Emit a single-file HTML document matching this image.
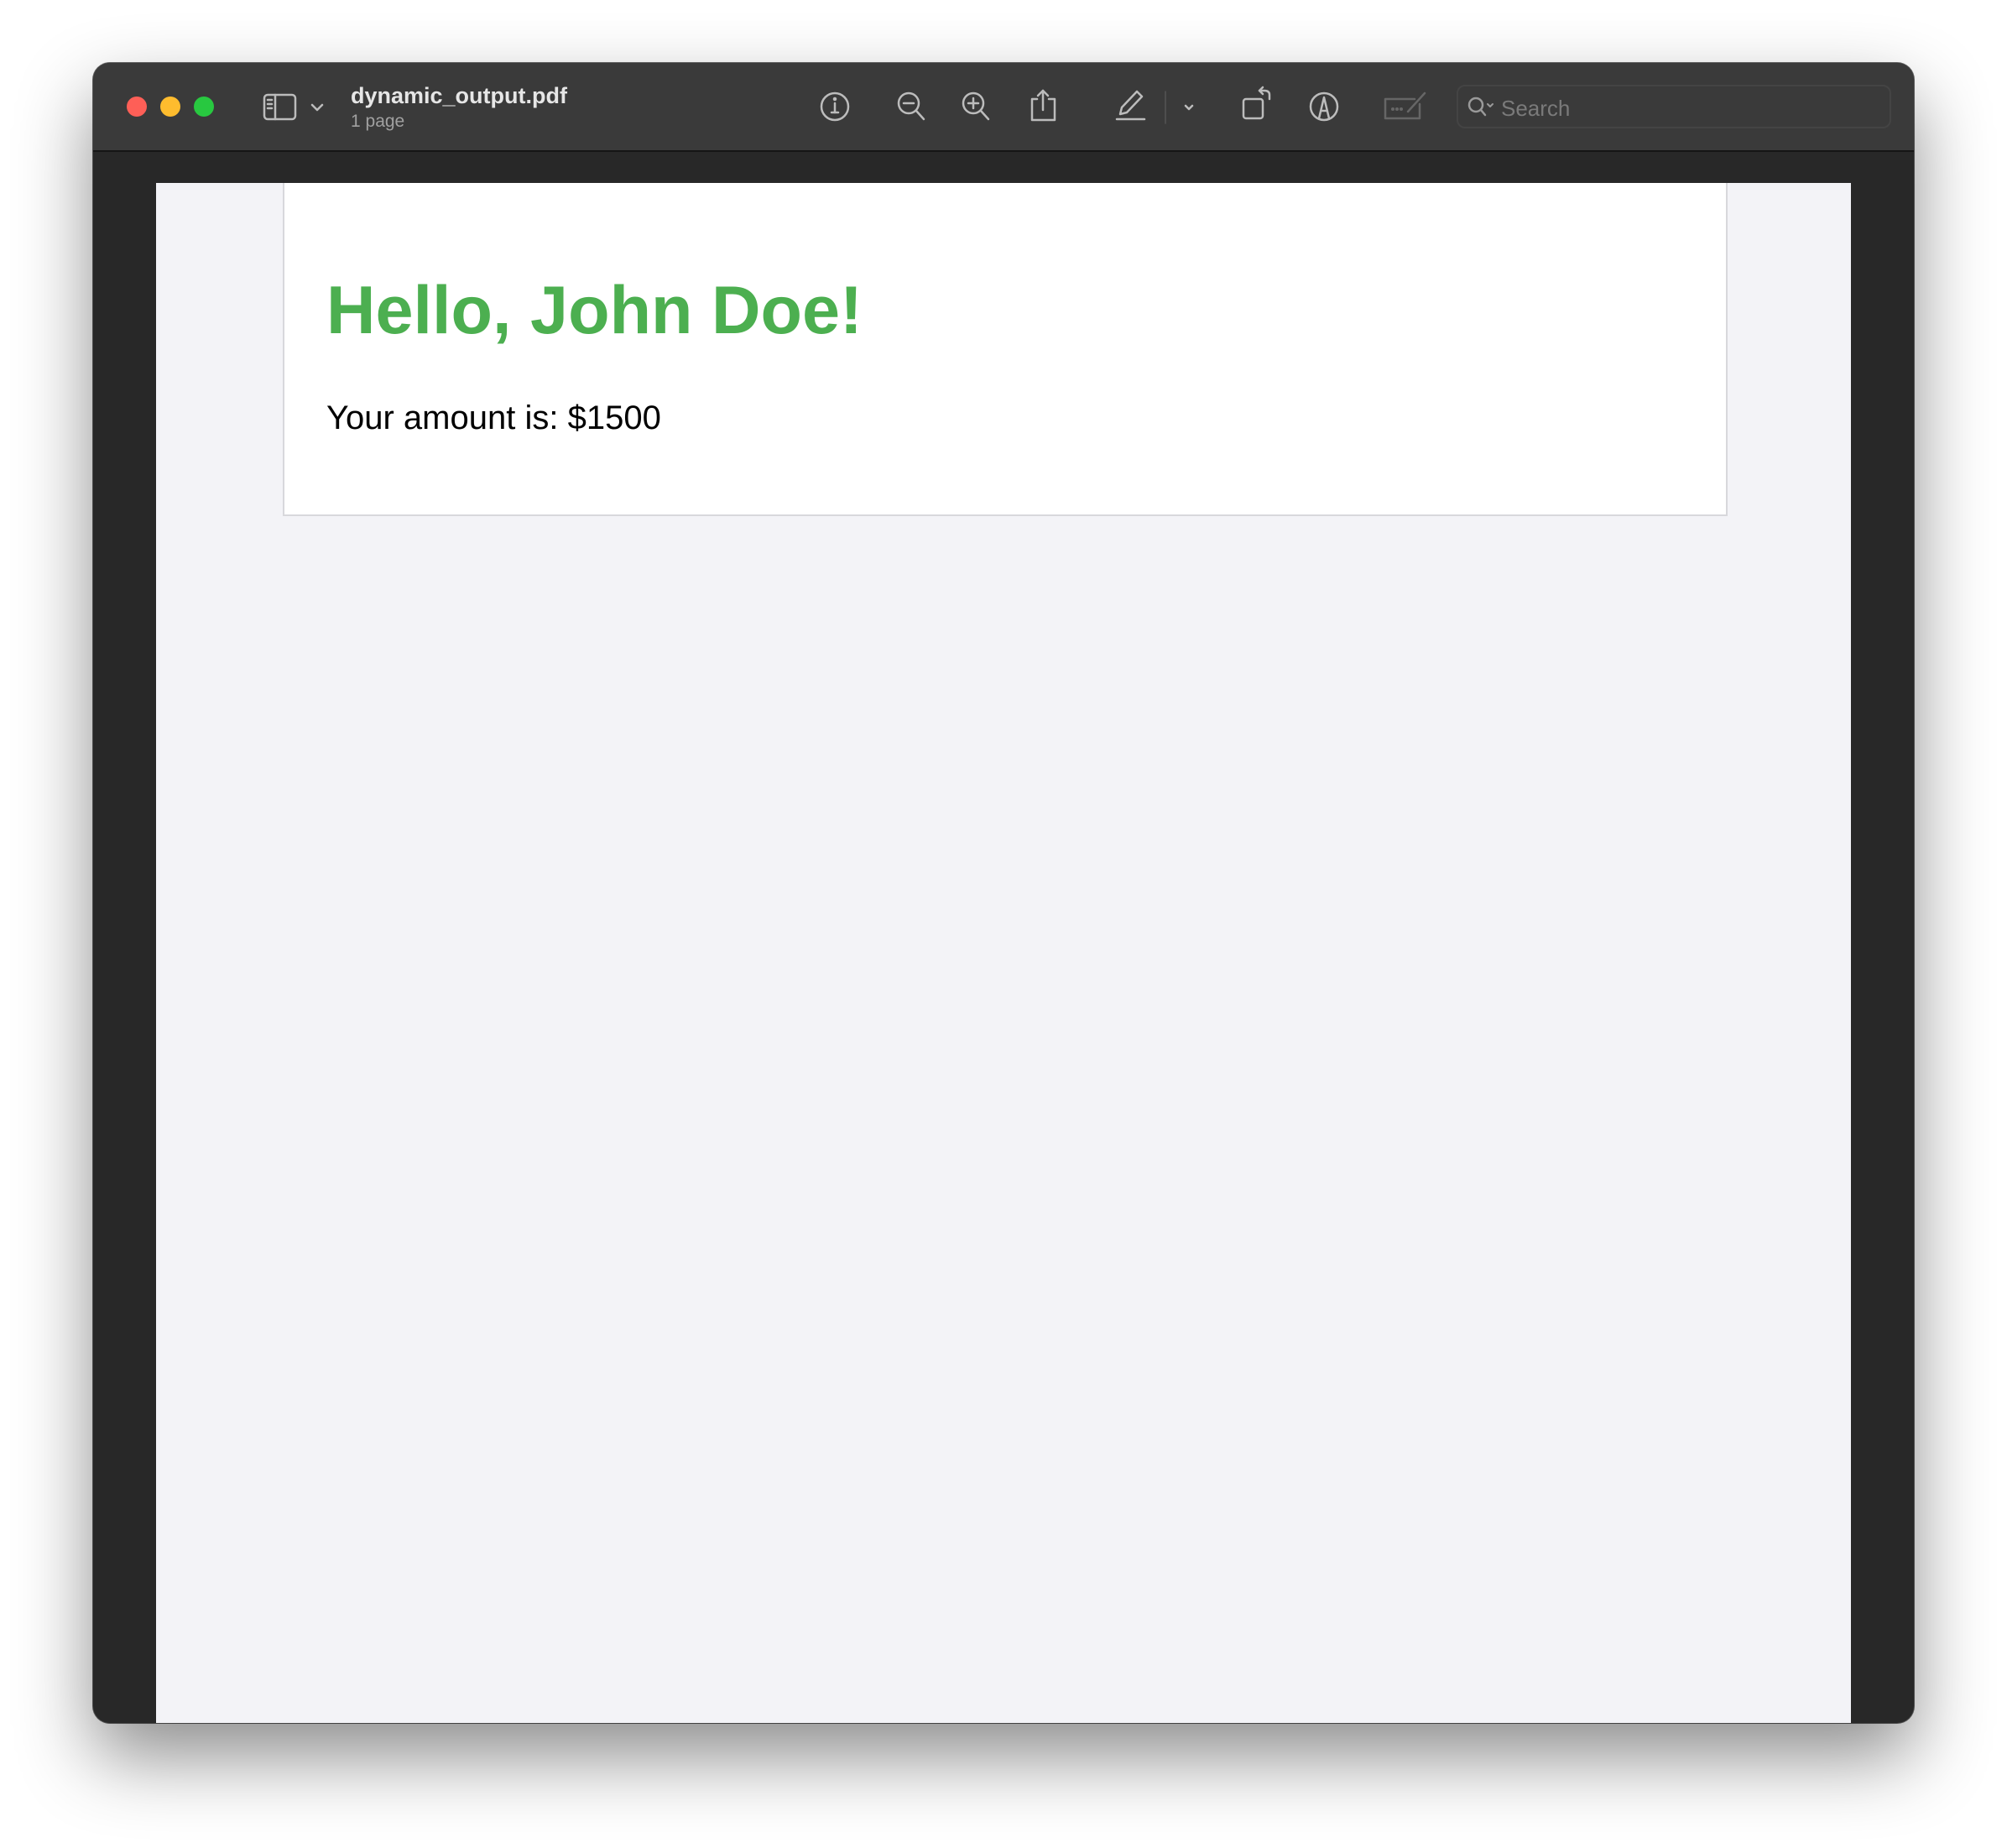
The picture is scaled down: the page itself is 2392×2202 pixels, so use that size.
<!DOCTYPE html>
<html><head><meta charset="utf-8"><style>
html,body{margin:0;padding:0;}
body{width:2392px;height:2202px;background:#fff;position:relative;overflow:hidden;font-family:"Liberation Sans",Arial,sans-serif;}
.win{position:absolute;left:111px;top:75px;width:2170px;height:1978px;border-radius:20px;background:#282828;overflow:hidden;box-shadow:0 40px 90px rgba(0,0,0,0.45),0 0 0 1px rgba(0,0,0,0.6);}
.tb{position:absolute;left:0;top:0;width:100%;height:104px;background:#3a3a3a;border-bottom:2px solid #151515;}
.dot{position:absolute;top:40px;width:24px;height:24px;border-radius:50%;}
.gray{position:absolute;left:75px;top:143px;width:2020px;height:1840px;background:#f3f3f7;}
.page{position:absolute;left:226px;top:143px;width:1722px;height:397px;background:#fff;border:2px solid #d8d8dc;border-top:none;box-sizing:border-box;}
h1{position:absolute;left:389px;top:330px;margin:0;font-size:81px;font-weight:bold;color:#4caf50;line-height:1;white-space:nowrap;}
p{position:absolute;left:389px;top:478px;margin:0;font-size:40px;color:#000;line-height:1;white-space:nowrap;}
</style></head><body>
<div class="win">
 <div class="tb">
  <div class="dot" style="left:40px;background:#fe5f57"></div>
  <div class="dot" style="left:80px;background:#febc2e"></div>
  <div class="dot" style="left:120px;background:#28c840"></div>
  <div style="position:absolute;left:307px;top:24px;font-size:27px;font-weight:bold;color:#e6e6e6;">dynamic_output.pdf</div>
  <div style="position:absolute;left:307px;top:58px;font-size:21px;color:#a0a0a0;">1 page</div>
  <div style="position:absolute;left:1625px;top:26px;width:518px;height:52px;border:2px solid #444;border-radius:10px;box-sizing:border-box;"></div>
  <div style="position:absolute;left:1678px;top:39px;font-size:26px;color:#7a7a7a;">Search</div>
 </div>
 <svg style="position:absolute;left:0;top:0" width="2170" height="104" fill="none" stroke="#bcbcbc" stroke-width="2.5" stroke-linecap="round" stroke-linejoin="round">
  <g transform="translate(-111,-75)">
   <rect x="315" y="113" width="37" height="29" rx="4"/><line x1="328" y1="113" x2="328" y2="142"/>
   <line x1="319" y1="119" x2="324" y2="119"/><line x1="319" y1="124" x2="324" y2="124"/><line x1="319" y1="129" x2="324" y2="129"/>
   <polyline points="372,125 378,131 384,125"/>
   <circle cx="995" cy="127" r="16"/><line x1="995" y1="123" x2="995" y2="134"/><circle cx="995" cy="118" r="1" fill="#bcbcbc"/><line x1="991" y1="134" x2="999" y2="134"/>
   <circle cx="1083" cy="123" r="12"/><line x1="1077" y1="123" x2="1089" y2="123"/><line x1="1092" y1="132" x2="1101" y2="142"/>
   <circle cx="1160" cy="123" r="12"/><line x1="1154" y1="123" x2="1166" y2="123"/><line x1="1160" y1="117" x2="1160" y2="129"/><line x1="1169" y1="132" x2="1178" y2="142"/>
   <path d="M1236 118 H1230 V143 H1257 V118 H1250"/><line x1="1243" y1="108" x2="1243" y2="131"/><polyline points="1237,114 1243,108 1249,114"/>
   <path d="M1335 136 L1337 128 L1355 109 L1361 115 L1343 134 Z"/><line x1="1331" y1="142" x2="1364" y2="142"/>
   <line x1="1389" y1="109" x2="1389" y2="147" stroke="#555" stroke-width="1.5"/>
   <polyline points="1413,126 1417,130 1421,126"/>
   <rect x="1482" y="118" width="23" height="23" rx="3"/><path d="M1513 118 V113 Q1513 108 1507 108 H1501"/><polyline points="1505,104 1501,108 1505,112"/>
   <circle cx="1578" cy="127" r="16"/><path d="M1572 141 L1578 116 L1584 141"/><line x1="1575" y1="132" x2="1581" y2="132"/>
   <g stroke="#666"><path d="M1686 118 H1651 V141 H1692 V124"/><line x1="1678" y1="133" x2="1698" y2="111"/><circle cx="1660" cy="130" r="0.8" fill="#666"/><circle cx="1665" cy="130" r="0.8" fill="#666"/><circle cx="1670" cy="130" r="0.8" fill="#666"/></g>
   <circle cx="1759" cy="125" r="8" stroke="#9a9a9a"/><line x1="1765" y1="131" x2="1770" y2="137" stroke="#9a9a9a"/><polyline points="1773,124 1776,127 1779,124" stroke="#9a9a9a" stroke-width="2"/>
  </g>
 </svg>
 <div class="gray"></div>
 <div class="page"></div>
</div>
<h1>Hello, John Doe!</h1>
<p>Your amount is: $1500</p>
</body></html>
